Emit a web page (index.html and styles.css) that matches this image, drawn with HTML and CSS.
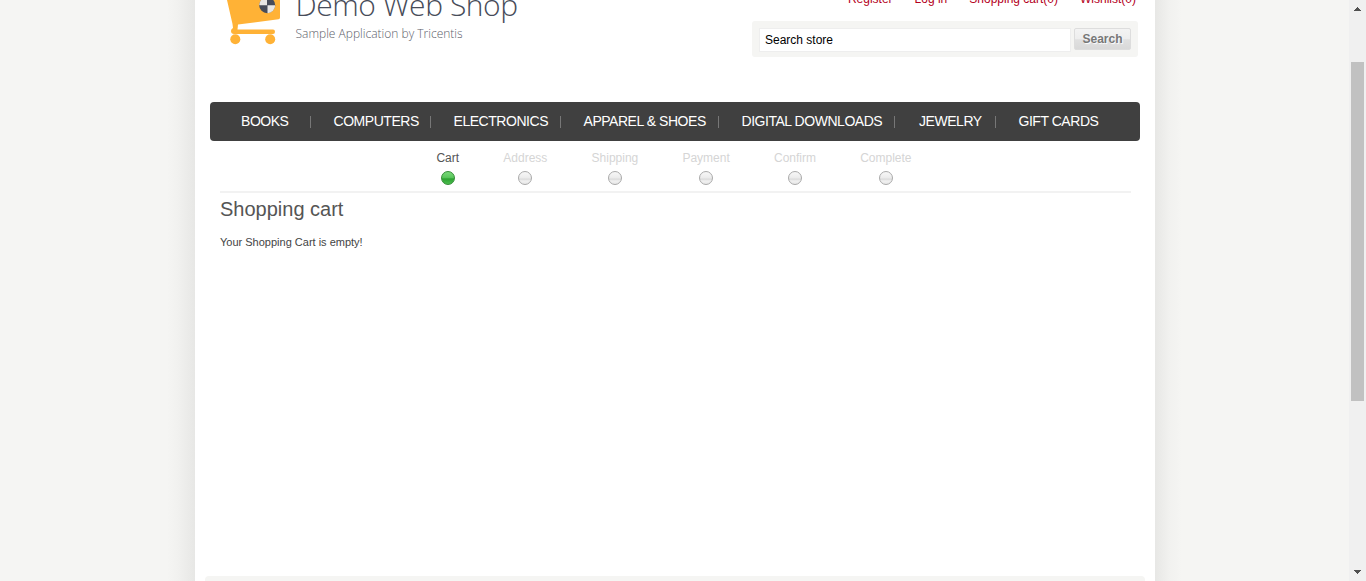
FILE: index.html
```html
<!DOCTYPE html>
<html lang="en">
<head>
<meta charset="utf-8">
<title>Demo Web Shop. Shopping Cart</title>
<link rel="stylesheet" href="styles.css">
</head>
<body>
<div class="viewport">
  <div class="page">
    <header class="header">
      <div class="logo">
        <svg class="logo-cart" width="62" height="50" viewBox="0 0 62 50">
          <g fill="#ffb236">
            <path d="M7 0H60V17.500Q60 19 58.500 19.200L18 24.500L17.500 29.500H53Q55 29.500 55 31.700T53 34H14Q11 34 11 31Q11 29 13 28L12.500 24Z"/>
            <circle cx="15.300" cy="39.300" r="5"/>
            <circle cx="50.200" cy="39.300" r="5"/>
          </g>
          <circle cx="47.200" cy="5.200" r="8" fill="#474c59"/>
          <path d="M47.500 5.200V13.200A8 8 0 0 0 55.200 5.200Z" fill="#e9e7e4"/>
          <path d="M47 5.200H39.200A8 8 0 0 1 47 -2.800Z" fill="#e9e7e4"/>
        </svg>
        <div class="logo-text">
          <div class="logo-name">Demo Web Shop</div>
          <div class="logo-tagline">Sample Application by Tricentis</div>
        </div>
      </div>
      <div class="tools">
        <nav class="links"><a>Register</a><a>Log in</a><a>Shopping cart(0)</a><a>Wishlist(0)</a></nav>
        <form class="search">
          <div class="search-field">Search store</div>
          <button class="search-button" type="button">Search</button>
        </form>
      </div>
    </header>
    <nav class="menu">
      <a class="menu-item">BOOKS</a>
      <a class="menu-item">COMPUTERS</a>
      <a class="menu-item">ELECTRONICS</a>
      <a class="menu-item">APPAREL &amp; SHOES</a>
      <a class="menu-item">DIGITAL DOWNLOADS</a>
      <a class="menu-item">JEWELRY</a>
      <a class="menu-item">GIFT CARDS</a>
    </nav>
    <main class="content">
      <ol class="steps">
        <li class="step active">Cart<i class="dot"></i></li>
        <li class="step">Address<i class="dot"></i></li>
        <li class="step">Shipping<i class="dot"></i></li>
        <li class="step">Payment<i class="dot"></i></li>
        <li class="step">Confirm<i class="dot"></i></li>
        <li class="step">Complete<i class="dot"></i></li>
      </ol>
      <h1 class="title">Shopping cart</h1>
      <p class="message">Your Shopping Cart is empty!</p>
    </main>
    <footer class="footer"></footer>
  </div>
</div>
<div class="scrollbar">
  <svg width="7" height="4" viewBox="0 0 7 4" shape-rendering="crispEdges"><path d="M3 0h1v1h1v1h1v1h1v1H0V3h1V2h1V1h1Z" fill="#505050"/></svg>
  <div class="thumb"></div>
  <svg width="7" height="4" viewBox="0 0 7 4" shape-rendering="crispEdges"><path d="M0 0h7v1H6v1H5v1H4v1H3V3H2V2H1V1H0Z" fill="#505050"/></svg>
</div>
</body>
</html>
```

FILE: styles.css
```css
* { box-sizing: border-box; }
body {
  margin: 0;
  height: 581px;
  display: flex;
  overflow: hidden;
  background: #f5f5f3;
  font: 12px "Liberation Sans", Arial, sans-serif;
  color: #444;
}
.viewport {
  width: 1349px;
  padding-left: 195px;
  overflow: hidden;
  background: linear-gradient(90deg, #f5f5f3 167px, #f1f1ef 178px, #e7e7e5 195px, #e7e7e5 1155px, #f1f1ef 1169px, #f5f5f3 1182px);
}
.page {
  width: 960px;
  height: 581px;
  padding: 0 15px;
  display: flex;
  flex-direction: column;
  background: #fff;
}
.header { height: 102px; flex: none; display: flex; justify-content: space-between; }
.logo { display: flex; padding-left: 10px; }
.logo-cart { flex: none; }
.logo-text { margin: -15px 0 0 13.500px; font-family: "Open Sans", sans-serif; font-weight: 300; white-space: nowrap; }
.logo-name { font-size: 30px; line-height: 40px; letter-spacing: -.45px; color: #474c59; }
.logo-tagline { margin-top: 1px; font-size: 12px; line-height: 16px; color: #5c606a; }
.tools { width: 386px; margin-right: 2px; }
.links { height: 21px; margin-top: -8px; padding-right: 2px; display: flex; justify-content: flex-end; gap: 22px; line-height: 14px; color: #b4001c; white-space: nowrap; }
.search { height: 36px; margin: 8px 0 0; padding: 7px; display: flex; gap: 3px; background: #f5f5f3; border-radius: 3px; }
.search-field { width: 312px; height: 24px; flex: none; padding-left: 5px; border: 1px solid #eee; background: #fff; color: #000; line-height: 22px; }
.search-button { width: 57px; height: 22px; flex: none; padding: 0; border: 1px solid #ddd; border-radius: 2px; background: linear-gradient(#f3f3f3 0, #eee 48%, #e0e0e0 54%, #d9d9d9); color: #777; font: bold 12px "Liberation Sans", Arial, sans-serif; text-shadow: 1px 1px 1px #fff; }
.menu {
  height: 39px;
  flex: none;
  display: grid;
  grid-template-columns: 101px 120px 130px 158px 176px 101px 144px;
  align-items: center;
  background: #404040;
  border-radius: 4px;
  color: #fff;
  font-size: 14px;
  letter-spacing: -.46px;
}
.menu-item { height: 12px; padding-left: 22.500px; border-right: 1px solid #777; line-height: 11px; white-space: nowrap; }
.menu-item:first-child { padding-left: 31px; }
.menu-item:nth-child(6) { padding-left: 24px; }
.menu-item:last-child { border: 0; }
.content { flex: 1; padding: 10px 10px 0; }
.steps { width: 911px; height: 42px; margin: 0; padding: 0 3px 0 0; list-style: none; display: flex; justify-content: center; gap: 44.200px; border-bottom: 2px solid #f2f2f2; }
.step { display: flex; flex-direction: column; align-items: center; color: #d5d5d5; line-height: 14px; }
.step.active { color: #555; }
.dot { width: 14px; height: 14px; margin-top: 6px; border: 1px solid #aaa; border-radius: 50%; background: linear-gradient(#f7f7f7, #ededed 45%, #dcdcdc 60%, #f0f0f0 75%, #e8e8e8); }
.active .dot { border-color: #338c36; background: linear-gradient(#78d878, #5cc75e 45%, #2da231 58%, #4cbe4f); }
.title { margin: 4px 0 0; font-size: 20px; font-weight: 400; line-height: 24px; color: #555; }
.message { margin: 15px 0 0; font-size: 11px; line-height: 13px; }
.footer { height: 5px; margin: 0 -5px; background: #f5f5f3; border-radius: 4px 4px 0 0; }
.scrollbar { width: 17px; height: 581px; padding: 7px 0; display: flex; flex-direction: column; align-items: center; background: #f0f0f0; }
.scrollbar svg { flex: none; }
.thumb { width: 13px; height: 339px; margin: 51px 0 auto; background: #c1c1c1; }
```
